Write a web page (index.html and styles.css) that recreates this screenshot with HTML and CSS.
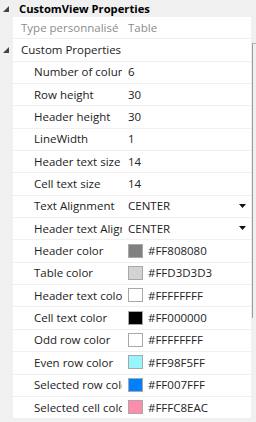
FILE: index.html
```html
<!DOCTYPE html>
<html>
<head>
<meta charset="utf-8">
<link rel="stylesheet" href="styles.css">
</head>
<body>
<div class="grid">
  <div class="cat-head">
    <div class="gutter"><svg class="expander" width="6" height="6" viewBox="0 0 6 6"><polygon points="6,0 6,6 0,6"/></svg></div>
    <div class="cat-title">CustomView Properties</div>
  </div>

  <div class="row readonly">
    <div class="gutter"></div>
    <div class="cell"><div class="name lvl1">Type personnalisé</div><div class="value">Table</div></div>
  </div>

  <div class="row">
    <div class="gutter"><svg class="expander" width="6" height="6" viewBox="0 0 6 6"><polygon points="6,0 6,6 0,6"/></svg></div>
    <div class="cell"><div class="name lvl1 wide">Custom Properties</div></div>
  </div>

  <div class="row"><div class="gutter"></div><div class="cell"><div class="name">Number of columns</div><div class="value">6</div></div></div>
  <div class="row"><div class="gutter"></div><div class="cell"><div class="name">Row height</div><div class="value">30</div></div></div>
  <div class="row"><div class="gutter"></div><div class="cell"><div class="name">Header height</div><div class="value">30</div></div></div>
  <div class="row"><div class="gutter"></div><div class="cell"><div class="name">LineWidth</div><div class="value">1</div></div></div>
  <div class="row"><div class="gutter"></div><div class="cell"><div class="name">Header text size</div><div class="value">14</div></div></div>
  <div class="row"><div class="gutter"></div><div class="cell"><div class="name">Cell text size</div><div class="value">14</div></div></div>
  <div class="row"><div class="gutter"></div><div class="cell"><div class="name">Text Alignment</div><div class="value combo">CENTER<svg class="drop" width="7" height="4" viewBox="0 0 7 4"><polygon points="0,0 7,0 3.5,4"/></svg></div></div></div>
  <div class="row"><div class="gutter"></div><div class="cell"><div class="name">Header text Alignment</div><div class="value combo">CENTER<svg class="drop" width="7" height="4" viewBox="0 0 7 4"><polygon points="0,0 7,0 3.5,4"/></svg></div></div></div>
  <div class="row"><div class="gutter"></div><div class="cell"><div class="name">Header color</div><div class="value"><span class="swatch" style="background:#808080"></span>#FF808080</div></div></div>
  <div class="row"><div class="gutter"></div><div class="cell"><div class="name">Table color</div><div class="value"><span class="swatch" style="background:#D3D3D3"></span>#FFD3D3D3</div></div></div>
  <div class="row"><div class="gutter"></div><div class="cell"><div class="name">Header text color</div><div class="value"><span class="swatch" style="background:#FFFFFF"></span>#FFFFFFFF</div></div></div>
  <div class="row"><div class="gutter"></div><div class="cell"><div class="name">Cell text color</div><div class="value"><span class="swatch" style="background:#000000"></span>#FF000000</div></div></div>
  <div class="row"><div class="gutter"></div><div class="cell"><div class="name">Odd row color</div><div class="value"><span class="swatch" style="background:#FFFFFF"></span>#FFFFFFFF</div></div></div>
  <div class="row"><div class="gutter"></div><div class="cell"><div class="name">Even row color</div><div class="value"><span class="swatch" style="background:#98F5FF"></span>#FF98F5FF</div></div></div>
  <div class="row"><div class="gutter"></div><div class="cell"><div class="name">Selected row color</div><div class="value"><span class="swatch" style="background:#007FFF"></span>#FF007FFF</div></div></div>
  <div class="row"><div class="gutter"></div><div class="cell"><div class="name">Selected cell color</div><div class="value"><span class="swatch" style="background:#FC8EAC"></span>#FFFC8EAC</div></div></div>

  <div class="thumb"></div>
</div>
</body>
</html>
```
FILE: styles.css
```css
html, body {
  margin: 0;
  padding: 0;
  background: #f0f0f0;
}
body {
  width: 256px;
  height: 422px;
  overflow: hidden;
  font-family: "Open Sans", "Noto Sans", sans-serif;
  font-size: 11.5px;
  color: #222;
}
.grid {
  position: relative;
  padding-right: 5px;
}
.cat-head {
  display: flex;
  height: 17px;
  align-items: center;
}
.gutter {
  width: 13px;
  flex: none;
  display: flex;
  align-items: center;
  justify-content: flex-start;
  padding-left: 3px;
  box-sizing: border-box;
}
.expander {
  fill: #444;
  display: block;
}
.cat-title {
  font-weight: bold;
  font-size: 11.2px;
  padding-left: 6px;
  color: #000;
}
.row {
  display: flex;
  height: 21.35px;
  margin-bottom: 1px;
}
.cell {
  flex: 1;
  background: #fff;
  display: flex;
  align-items: center;
  min-width: 0;
  padding-bottom: 1px;
  box-sizing: border-box;
}
.name {
  width: 109px;
  flex: none;
  box-sizing: border-box;
  padding-left: 21px;
  overflow: hidden;
  white-space: nowrap;
}
.name.lvl1 {
  padding-left: 8px;
}
.name.wide {
  width: auto;
}
.value {
  margin-left: 6px;
  flex: 1;
  display: flex;
  align-items: center;
  white-space: nowrap;
}
.readonly .name,
.readonly .value {
  color: #8c8c8c;
}
.combo {
  justify-content: space-between;
  padding-right: 5px;
}
.drop {
  fill: #111;
  display: block;
}
.swatch {
  width: 15px;
  height: 14px;
  box-sizing: border-box;
  border: 1px solid #a8a8a8;
  margin-right: 5px;
  flex: none;
}
.thumb {
  position: absolute;
  left: 252px;
  top: 43px;
  width: 4px;
  height: 275px;
  border-left: 1px solid #9a9a9a;
  border-top: 1px solid #b0b0b0;
  box-sizing: border-box;
}
```
